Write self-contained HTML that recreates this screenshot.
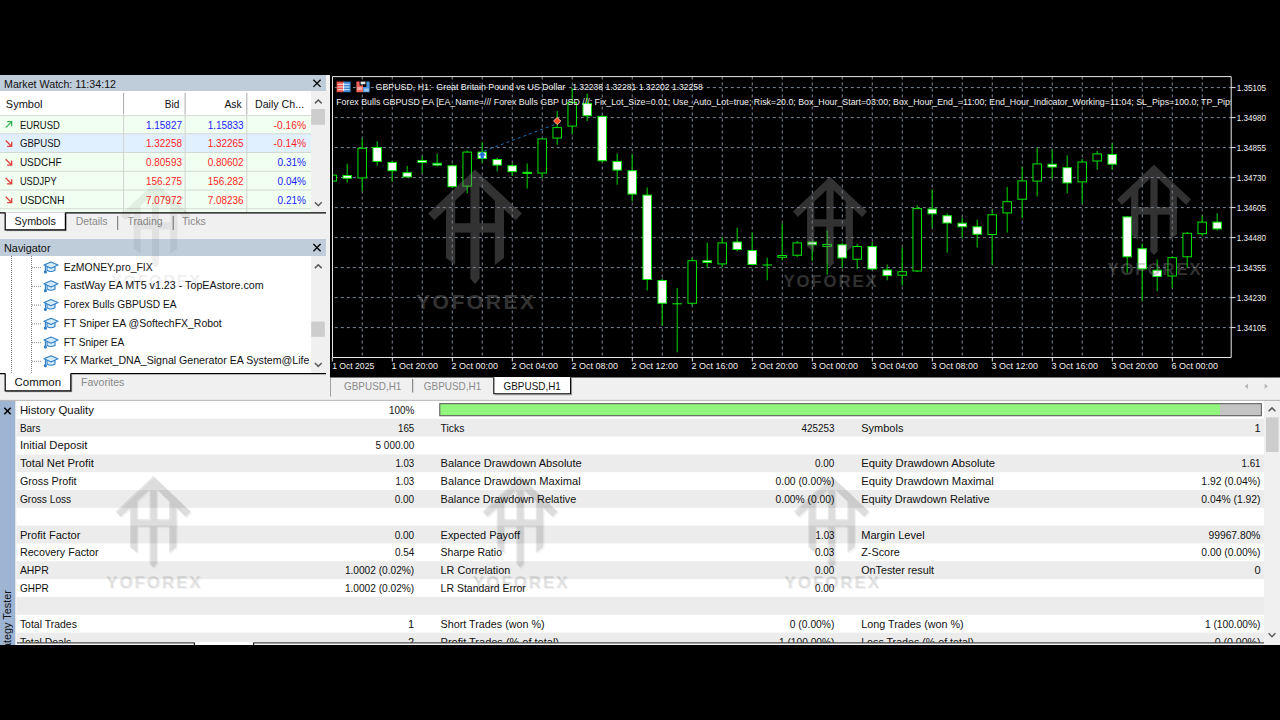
<!DOCTYPE html>
<html><head><meta charset="utf-8"><title>MetaTrader 5 - Strategy Tester</title>
<style>
html,body{margin:0;padding:0;background:#000;width:1280px;height:720px;overflow:hidden}
svg{display:block}
text{font-family:"Liberation Sans",sans-serif;white-space:pre}
.ui{font-size:11px;fill:#111}
.ch{font-size:9.3px;fill:#f4f4f4;opacity:0.995}
</style></head><body>
<svg width="1280" height="720" viewBox="0 0 1280 720">
<rect x="0.00" y="0.00" width="1280.00" height="720.00" fill="#000"/>
<rect x="0.00" y="75.00" width="1280.00" height="570.00" fill="#f0f0f0"/>
<defs>
<g id="logo">
<polygon points="0,0 46.9,44.2 40.7,50.9 0,12.6 -40.7,50.9 -46.9,44.2"/>
<polygon points="-29,28 -19.8,22 -19.8,95.7 -29,88.5"/>
<polygon points="29,28 19.8,22 19.8,95.7 29,88.5"/>
<polygon points="-4.6,6 4.6,6 4.6,109.4 0,114.6 -4.6,109.4"/>
<rect x="-29" y="53.8" width="58" height="9.4"/>
</g>
<clipPath id="chartclip"><rect x="333" y="77" width="898" height="280"/></clipPath>
<clipPath id="mwclip"><rect x="0" y="91" width="311" height="121.5"/></clipPath>
<clipPath id="navclip"><rect x="0" y="256" width="311" height="117"/></clipPath>
<clipPath id="stclip"><rect x="0" y="400" width="1280" height="243"/></clipPath>
</defs>
<rect x="0.00" y="75.00" width="326.00" height="16.00" fill="#bfcddb"/>
<text class="ui" x="4.0" y="88.0" textLength="112.0" lengthAdjust="spacingAndGlyphs">Market Watch: 11:34:12</text>
<line x1="313.40" y1="79.70" x2="320.60" y2="86.90" stroke="#000" stroke-width="1.3"/>
<line x1="313.40" y1="86.90" x2="320.60" y2="79.70" stroke="#000" stroke-width="1.3"/>
<rect x="0.00" y="91.00" width="311.00" height="121.50" fill="#fff"/>
<rect x="0.00" y="115.60" width="311.00" height="18.15" fill="#f0fff0"/>
<rect x="0.00" y="133.75" width="311.00" height="18.75" fill="#e1f0ff"/>
<rect x="0.00" y="152.50" width="311.00" height="18.75" fill="#f0fff0"/>
<rect x="0.00" y="171.25" width="311.00" height="18.75" fill="#f0fff0"/>
<rect x="0.00" y="190.00" width="311.00" height="18.75" fill="#f0fff0"/>
<rect x="0.00" y="208.75" width="311.00" height="3.75" fill="#f0fff0"/>
<line x1="0.00" y1="115.60" x2="311.00" y2="115.60" stroke="#d4d8d4" stroke-width="1"/>
<line x1="0.00" y1="133.75" x2="311.00" y2="133.75" stroke="#d4d8d4" stroke-width="1"/>
<line x1="0.00" y1="152.50" x2="311.00" y2="152.50" stroke="#d4d8d4" stroke-width="1"/>
<line x1="0.00" y1="171.25" x2="311.00" y2="171.25" stroke="#d4d8d4" stroke-width="1"/>
<line x1="0.00" y1="190.00" x2="311.00" y2="190.00" stroke="#d4d8d4" stroke-width="1"/>
<line x1="0.00" y1="208.75" x2="311.00" y2="208.75" stroke="#d4d8d4" stroke-width="1"/>
<line x1="123.60" y1="115.00" x2="123.60" y2="212.50" stroke="#d0d4d0" stroke-width="1"/>
<line x1="123.60" y1="93.00" x2="123.60" y2="114.50" stroke="#a8a8a8" stroke-width="1"/>
<line x1="185.10" y1="115.00" x2="185.10" y2="212.50" stroke="#d0d4d0" stroke-width="1"/>
<line x1="185.10" y1="93.00" x2="185.10" y2="114.50" stroke="#a8a8a8" stroke-width="1"/>
<line x1="246.80" y1="115.00" x2="246.80" y2="212.50" stroke="#d0d4d0" stroke-width="1"/>
<line x1="246.80" y1="93.00" x2="246.80" y2="114.50" stroke="#a8a8a8" stroke-width="1"/>
<text class="ui" x="5.8" y="108.3" textLength="36.7" lengthAdjust="spacingAndGlyphs">Symbol</text>
<text class="ui" x="179.3" y="108.3" text-anchor="end" textLength="14.6" lengthAdjust="spacingAndGlyphs">Bid</text>
<text class="ui" x="241.7" y="108.3" text-anchor="end" textLength="17.3" lengthAdjust="spacingAndGlyphs">Ask</text>
<text class="ui" x="255.0" y="108.3" textLength="49.1" lengthAdjust="spacingAndGlyphs">Daily Ch...</text>
<path d="M5.699999999999999,127.7 L11.5,121.9 M7.1,121.7 H11.7 V126.3" stroke="#2fb34a" stroke-width="1.2" fill="none"/>
<text class="ui" x="19.9" y="128.5" textLength="39.9" lengthAdjust="spacingAndGlyphs">EURUSD</text>
<text class="ui" x="181.9" y="128.5" text-anchor="end" textLength="35.8" lengthAdjust="spacingAndGlyphs" style="fill:#1a1aff">1.15827</text>
<text class="ui" x="243.6" y="128.5" text-anchor="end" textLength="35.9" lengthAdjust="spacingAndGlyphs" style="fill:#1a1aff">1.15833</text>
<text class="ui" x="306.0" y="128.5" text-anchor="end" textLength="32.4" lengthAdjust="spacingAndGlyphs" style="fill:#ff1e1e">-0.16%</text>
<path d="M5.699999999999999,140.45 L11.5,146.25 M7.1,146.45 H11.7 V141.85" stroke="#e0403a" stroke-width="1.3" fill="none"/>
<text class="ui" x="19.9" y="147.2" textLength="40.7" lengthAdjust="spacingAndGlyphs">GBPUSD</text>
<text class="ui" x="181.9" y="147.2" text-anchor="end" textLength="35.8" lengthAdjust="spacingAndGlyphs" style="fill:#ff1e1e">1.32258</text>
<text class="ui" x="243.6" y="147.2" text-anchor="end" textLength="35.9" lengthAdjust="spacingAndGlyphs" style="fill:#ff1e1e">1.32265</text>
<text class="ui" x="306.0" y="147.2" text-anchor="end" textLength="32.4" lengthAdjust="spacingAndGlyphs" style="fill:#ff1e1e">-0.14%</text>
<path d="M5.699999999999999,159.2 L11.5,165.0 M7.1,165.2 H11.7 V160.6" stroke="#e0403a" stroke-width="1.3" fill="none"/>
<text class="ui" x="19.9" y="166.0" textLength="41.7" lengthAdjust="spacingAndGlyphs">USDCHF</text>
<text class="ui" x="181.9" y="166.0" text-anchor="end" textLength="35.8" lengthAdjust="spacingAndGlyphs" style="fill:#ff1e1e">0.80593</text>
<text class="ui" x="243.6" y="166.0" text-anchor="end" textLength="35.9" lengthAdjust="spacingAndGlyphs" style="fill:#ff1e1e">0.80602</text>
<text class="ui" x="306.0" y="166.0" text-anchor="end" textLength="28.4" lengthAdjust="spacingAndGlyphs" style="fill:#1a1aff">0.31%</text>
<path d="M5.699999999999999,177.95 L11.5,183.75 M7.1,183.95 H11.7 V179.35" stroke="#e0403a" stroke-width="1.3" fill="none"/>
<text class="ui" x="19.9" y="184.8" textLength="36.7" lengthAdjust="spacingAndGlyphs">USDJPY</text>
<text class="ui" x="181.9" y="184.8" text-anchor="end" textLength="35.8" lengthAdjust="spacingAndGlyphs" style="fill:#ff1e1e">156.275</text>
<text class="ui" x="243.6" y="184.8" text-anchor="end" textLength="35.9" lengthAdjust="spacingAndGlyphs" style="fill:#ff1e1e">156.282</text>
<text class="ui" x="306.0" y="184.8" text-anchor="end" textLength="28.4" lengthAdjust="spacingAndGlyphs" style="fill:#1a1aff">0.04%</text>
<path d="M5.699999999999999,196.7 L11.5,202.5 M7.1,202.7 H11.7 V198.1" stroke="#e0403a" stroke-width="1.3" fill="none"/>
<text class="ui" x="19.9" y="203.5" textLength="44.6" lengthAdjust="spacingAndGlyphs">USDCNH</text>
<text class="ui" x="181.9" y="203.5" text-anchor="end" textLength="35.8" lengthAdjust="spacingAndGlyphs" style="fill:#ff1e1e">7.07972</text>
<text class="ui" x="243.6" y="203.5" text-anchor="end" textLength="35.9" lengthAdjust="spacingAndGlyphs" style="fill:#ff1e1e">7.08236</text>
<text class="ui" x="306.0" y="203.5" text-anchor="end" textLength="28.4" lengthAdjust="spacingAndGlyphs" style="fill:#1a1aff">0.21%</text>
<rect x="311.00" y="91.00" width="15.00" height="121.50" fill="#f0f0f0"/>
<path d="M314.90000000000003,103.4 L318.3,100.0 L321.7,103.4" stroke="#5a5a5a" stroke-width="1.5" fill="none"/>
<path d="M314.90000000000003,202.3 L318.3,205.7 L321.7,202.3" stroke="#5a5a5a" stroke-width="1.5" fill="none"/>
<rect x="311.20" y="109.00" width="13.80" height="15.80" fill="#cdcdcd"/>
<line x1="0.00" y1="212.80" x2="326.00" y2="212.80" stroke="#000" stroke-width="1.2"/>
<rect x="5.20" y="212.20" width="60.20" height="17.60" fill="#fff"/>
<path d="M5.2,212.8 V229.8 H65.4 V212.8" stroke="#000" stroke-width="1.2" fill="none"/>
<path d="M6.5,230.6 H66.3 V214" stroke="#000" stroke-opacity="0.38" stroke-width="1" fill="none"/>
<text class="ui" x="14.6" y="225.2" textLength="41.2" lengthAdjust="spacingAndGlyphs">Symbols</text>
<text class="ui" x="75.7" y="225.2" textLength="31.9" lengthAdjust="spacingAndGlyphs" style="fill:#8a8a8a">Details</text>
<text class="ui" x="127.5" y="225.2" textLength="35.0" lengthAdjust="spacingAndGlyphs" style="fill:#8a8a8a">Trading</text>
<text class="ui" x="181.9" y="225.2" textLength="23.9" lengthAdjust="spacingAndGlyphs" style="fill:#8a8a8a">Ticks</text>
<line x1="117.70" y1="216.00" x2="117.70" y2="230.00" stroke="#707070" stroke-width="1"/>
<line x1="173.20" y1="216.00" x2="173.20" y2="230.00" stroke="#707070" stroke-width="1"/>
<rect x="0.00" y="239.00" width="326.00" height="17.00" fill="#bfcddb"/>
<text class="ui" x="4.0" y="252.1" textLength="46.5" lengthAdjust="spacingAndGlyphs">Navigator</text>
<line x1="313.40" y1="244.00" x2="320.60" y2="251.20" stroke="#000" stroke-width="1.3"/>
<line x1="313.40" y1="251.20" x2="320.60" y2="244.00" stroke="#000" stroke-width="1.3"/>
<rect x="0.00" y="256.00" width="311.00" height="117.30" fill="#fff"/>
<rect x="311.00" y="256.00" width="15.00" height="117.30" fill="#f0f0f0"/>
<path d="M314.90000000000003,268.09999999999997 L318.3,264.7 L321.7,268.09999999999997" stroke="#5a5a5a" stroke-width="1.5" fill="none"/>
<path d="M314.90000000000003,363.0 L318.3,366.4 L321.7,363.0" stroke="#5a5a5a" stroke-width="1.5" fill="none"/>
<rect x="311.20" y="321.60" width="13.60" height="15.20" fill="#cdcdcd"/>
<g clip-path="url(#navclip)">
<line x1="11.50" y1="256.00" x2="11.50" y2="373.00" stroke="#808080" stroke-width="1" stroke-dasharray="1 1"/>
<line x1="31.50" y1="256.00" x2="31.50" y2="373.00" stroke="#808080" stroke-width="1" stroke-dasharray="1 1"/>
<line x1="32.00" y1="267.60" x2="41.50" y2="267.60" stroke="#909090" stroke-width="1" stroke-dasharray="1 1"/>
<g transform="translate(51,267.6)" stroke="#2e7fc4" stroke-width="1.1" fill="#d6ebfa" stroke-linejoin="round"><path d="M-4,-1 V2.6 Q0,5.2 4,2.6 V-1"/><path d="M-7,-2.6 L0,-5.6 L7,-2.6 L0,0.6 Z"/><path d="M-5.6,-2.2 V3.6" fill="none"/><circle cx="-5.6" cy="4.3" r="1" fill="#2e7fc4"/></g>
<text class="ui" x="63.7" y="270.6" textLength="89.0" lengthAdjust="spacingAndGlyphs">EzMONEY.pro_FIX</text>
<line x1="32.00" y1="286.35" x2="41.50" y2="286.35" stroke="#909090" stroke-width="1" stroke-dasharray="1 1"/>
<g transform="translate(51,286.35)" stroke="#2e7fc4" stroke-width="1.1" fill="#d6ebfa" stroke-linejoin="round"><path d="M-4,-1 V2.6 Q0,5.2 4,2.6 V-1"/><path d="M-7,-2.6 L0,-5.6 L7,-2.6 L0,0.6 Z"/><path d="M-5.6,-2.2 V3.6" fill="none"/><circle cx="-5.6" cy="4.3" r="1" fill="#2e7fc4"/></g>
<text class="ui" x="63.7" y="289.4" textLength="200.0" lengthAdjust="spacingAndGlyphs">FastWay EA MT5 v1.23 - TopEAstore.com</text>
<line x1="32.00" y1="305.10" x2="41.50" y2="305.10" stroke="#909090" stroke-width="1" stroke-dasharray="1 1"/>
<g transform="translate(51,305.1)" stroke="#2e7fc4" stroke-width="1.1" fill="#d6ebfa" stroke-linejoin="round"><path d="M-4,-1 V2.6 Q0,5.2 4,2.6 V-1"/><path d="M-7,-2.6 L0,-5.6 L7,-2.6 L0,0.6 Z"/><path d="M-5.6,-2.2 V3.6" fill="none"/><circle cx="-5.6" cy="4.3" r="1" fill="#2e7fc4"/></g>
<text class="ui" x="63.7" y="308.1" textLength="112.9" lengthAdjust="spacingAndGlyphs">Forex Bulls GBPUSD EA</text>
<line x1="32.00" y1="323.85" x2="41.50" y2="323.85" stroke="#909090" stroke-width="1" stroke-dasharray="1 1"/>
<g transform="translate(51,323.85)" stroke="#2e7fc4" stroke-width="1.1" fill="#d6ebfa" stroke-linejoin="round"><path d="M-4,-1 V2.6 Q0,5.2 4,2.6 V-1"/><path d="M-7,-2.6 L0,-5.6 L7,-2.6 L0,0.6 Z"/><path d="M-5.6,-2.2 V3.6" fill="none"/><circle cx="-5.6" cy="4.3" r="1" fill="#2e7fc4"/></g>
<text class="ui" x="63.7" y="326.9" textLength="158.1" lengthAdjust="spacingAndGlyphs">FT Sniper EA @SoftechFX_Robot</text>
<line x1="32.00" y1="342.60" x2="41.50" y2="342.60" stroke="#909090" stroke-width="1" stroke-dasharray="1 1"/>
<g transform="translate(51,342.6)" stroke="#2e7fc4" stroke-width="1.1" fill="#d6ebfa" stroke-linejoin="round"><path d="M-4,-1 V2.6 Q0,5.2 4,2.6 V-1"/><path d="M-7,-2.6 L0,-5.6 L7,-2.6 L0,0.6 Z"/><path d="M-5.6,-2.2 V3.6" fill="none"/><circle cx="-5.6" cy="4.3" r="1" fill="#2e7fc4"/></g>
<text class="ui" x="63.7" y="345.6" textLength="60.6" lengthAdjust="spacingAndGlyphs">FT Sniper EA</text>
<line x1="32.00" y1="361.35" x2="41.50" y2="361.35" stroke="#909090" stroke-width="1" stroke-dasharray="1 1"/>
<g transform="translate(51,361.35)" stroke="#2e7fc4" stroke-width="1.1" fill="#d6ebfa" stroke-linejoin="round"><path d="M-4,-1 V2.6 Q0,5.2 4,2.6 V-1"/><path d="M-7,-2.6 L0,-5.6 L7,-2.6 L0,0.6 Z"/><path d="M-5.6,-2.2 V3.6" fill="none"/><circle cx="-5.6" cy="4.3" r="1" fill="#2e7fc4"/></g>
<text class="ui" x="63.7" y="364.4" textLength="245.7" lengthAdjust="spacingAndGlyphs">FX Market_DNA_Signal Generator EA System@Life</text>
</g>
<line x1="0.00" y1="373.60" x2="326.00" y2="373.60" stroke="#000" stroke-width="1.2"/>
<rect x="5.20" y="373.00" width="65.60" height="17.80" fill="#fff"/>
<path d="M5.2,373.6 V390.8 H70.8 V373.6" stroke="#000" stroke-width="1.2" fill="none"/>
<path d="M6.5,391.7 H71.7 V375" stroke="#000" stroke-opacity="0.38" stroke-width="1" fill="none"/>
<text class="ui" x="14.6" y="386.3" textLength="46.5" lengthAdjust="spacingAndGlyphs">Common</text>
<text class="ui" x="81.0" y="386.3" textLength="43.3" lengthAdjust="spacingAndGlyphs" style="fill:#8a8a8a">Favorites</text>
<rect x="330.00" y="75.00" width="950.00" height="302.50" fill="#000"/>
<g stroke="#7e8c9c" stroke-width="1" stroke-dasharray="3 3" fill="none">
<line x1="362.25" y1="76.5" x2="362.25" y2="357"/>
<line x1="392.25" y1="76.5" x2="392.25" y2="357"/>
<line x1="422.25" y1="76.5" x2="422.25" y2="357"/>
<line x1="452.25" y1="76.5" x2="452.25" y2="357"/>
<line x1="482.25" y1="76.5" x2="482.25" y2="357"/>
<line x1="512.25" y1="76.5" x2="512.25" y2="357"/>
<line x1="542.25" y1="76.5" x2="542.25" y2="357"/>
<line x1="572.25" y1="76.5" x2="572.25" y2="357"/>
<line x1="602.25" y1="76.5" x2="602.25" y2="357"/>
<line x1="632.25" y1="76.5" x2="632.25" y2="357"/>
<line x1="662.25" y1="76.5" x2="662.25" y2="357"/>
<line x1="692.25" y1="76.5" x2="692.25" y2="357"/>
<line x1="722.25" y1="76.5" x2="722.25" y2="357"/>
<line x1="752.25" y1="76.5" x2="752.25" y2="357"/>
<line x1="782.25" y1="76.5" x2="782.25" y2="357"/>
<line x1="812.25" y1="76.5" x2="812.25" y2="357"/>
<line x1="842.25" y1="76.5" x2="842.25" y2="357"/>
<line x1="872.25" y1="76.5" x2="872.25" y2="357"/>
<line x1="902.25" y1="76.5" x2="902.25" y2="357"/>
<line x1="932.25" y1="76.5" x2="932.25" y2="357"/>
<line x1="962.25" y1="76.5" x2="962.25" y2="357"/>
<line x1="992.25" y1="76.5" x2="992.25" y2="357"/>
<line x1="1022.25" y1="76.5" x2="1022.25" y2="357"/>
<line x1="1052.25" y1="76.5" x2="1052.25" y2="357"/>
<line x1="1082.25" y1="76.5" x2="1082.25" y2="357"/>
<line x1="1112.25" y1="76.5" x2="1112.25" y2="357"/>
<line x1="1142.25" y1="76.5" x2="1142.25" y2="357"/>
<line x1="1172.25" y1="76.5" x2="1172.25" y2="357"/>
<line x1="1202.25" y1="76.5" x2="1202.25" y2="357"/>
<line x1="334.8" y1="87.60" x2="1231" y2="87.60"/>
<line x1="334.8" y1="117.60" x2="1231" y2="117.60"/>
<line x1="334.8" y1="147.60" x2="1231" y2="147.60"/>
<line x1="334.8" y1="177.60" x2="1231" y2="177.60"/>
<line x1="334.8" y1="207.60" x2="1231" y2="207.60"/>
<line x1="334.8" y1="237.60" x2="1231" y2="237.60"/>
<line x1="334.8" y1="267.60" x2="1231" y2="267.60"/>
<line x1="334.8" y1="297.60" x2="1231" y2="297.60"/>
<line x1="334.8" y1="327.60" x2="1231" y2="327.60"/>
</g>
<g clip-path="url(#chartclip)">
<line x1="332.20" y1="174.60" x2="332.20" y2="181.60" stroke="#00c000" stroke-width="1.15"/>
<rect x="327.95" y="175.10" width="8.50" height="6.00" fill="#000" stroke="#00e600" stroke-width="1"/>
<line x1="347.20" y1="163.75" x2="347.20" y2="182.50" stroke="#00c000" stroke-width="1.15"/>
<rect x="342.95" y="175.50" width="8.50" height="2.75" fill="#fff" stroke="#00e600" stroke-width="1"/>
<line x1="362.20" y1="138.40" x2="362.20" y2="190.90" stroke="#00c000" stroke-width="1.15"/>
<rect x="357.95" y="148.30" width="8.50" height="29.60" fill="#000" stroke="#00e600" stroke-width="1"/>
<line x1="377.20" y1="141.25" x2="377.20" y2="165.60" stroke="#00c000" stroke-width="1.15"/>
<rect x="372.95" y="147.40" width="8.50" height="14.00" fill="#fff" stroke="#00e600" stroke-width="1"/>
<line x1="392.20" y1="160.90" x2="392.20" y2="181.60" stroke="#00c000" stroke-width="1.15"/>
<rect x="387.95" y="162.40" width="8.50" height="8.35" fill="#fff" stroke="#00e600" stroke-width="1"/>
<line x1="407.20" y1="166.00" x2="407.20" y2="177.80" stroke="#00c000" stroke-width="1.15"/>
<rect x="402.95" y="172.70" width="8.50" height="4.20" fill="#fff" stroke="#00e600" stroke-width="1"/>
<line x1="422.20" y1="156.25" x2="422.20" y2="173.10" stroke="#00c000" stroke-width="1.15"/>
<rect x="417.95" y="160.50" width="8.50" height="2.00" fill="#fff" stroke="#00e600" stroke-width="1"/>
<line x1="437.20" y1="153.40" x2="437.20" y2="166.60" stroke="#00c000" stroke-width="1.15"/>
<rect x="432.95" y="163.30" width="8.50" height="1.80" fill="#fff" stroke="#00e600" stroke-width="1"/>
<line x1="452.20" y1="164.70" x2="452.20" y2="188.10" stroke="#00c000" stroke-width="1.15"/>
<rect x="447.95" y="165.75" width="8.50" height="20.95" fill="#fff" stroke="#00e600" stroke-width="1"/>
<line x1="467.20" y1="150.60" x2="467.20" y2="193.20" stroke="#00c000" stroke-width="1.15"/>
<rect x="462.95" y="152.10" width="8.50" height="34.00" fill="#000" stroke="#00e600" stroke-width="1"/>
<line x1="482.20" y1="142.20" x2="482.20" y2="162.80" stroke="#00c000" stroke-width="1.15"/>
<rect x="477.95" y="152.10" width="8.50" height="6.40" fill="#fff" stroke="#00e600" stroke-width="1"/>
<line x1="497.20" y1="158.10" x2="497.20" y2="171.25" stroke="#00c000" stroke-width="1.15"/>
<rect x="492.95" y="159.50" width="8.50" height="5.60" fill="#fff" stroke="#00e600" stroke-width="1"/>
<line x1="512.20" y1="163.75" x2="512.20" y2="176.00" stroke="#00c000" stroke-width="1.15"/>
<rect x="507.95" y="165.75" width="8.50" height="5.95" fill="#fff" stroke="#00e600" stroke-width="1"/>
<line x1="527.20" y1="163.40" x2="527.20" y2="188.50" stroke="#00c000" stroke-width="1.15"/>
<rect x="522.95" y="172.30" width="8.50" height="1.20" fill="#fff" stroke="#00e600" stroke-width="1"/>
<line x1="542.20" y1="138.40" x2="542.20" y2="177.80" stroke="#00c000" stroke-width="1.15"/>
<rect x="537.95" y="138.90" width="8.50" height="34.10" fill="#000" stroke="#00e600" stroke-width="1"/>
<line x1="557.20" y1="111.10" x2="557.20" y2="144.70" stroke="#00c000" stroke-width="1.15"/>
<rect x="552.95" y="127.60" width="8.50" height="10.50" fill="#000" stroke="#00e600" stroke-width="1"/>
<line x1="572.20" y1="88.10" x2="572.20" y2="134.50" stroke="#00c000" stroke-width="1.15"/>
<rect x="567.95" y="102.50" width="8.50" height="23.60" fill="#000" stroke="#00e600" stroke-width="1"/>
<line x1="587.20" y1="93.75" x2="587.20" y2="121.00" stroke="#00c000" stroke-width="1.15"/>
<rect x="582.95" y="103.50" width="8.50" height="12.25" fill="#fff" stroke="#00e600" stroke-width="1"/>
<line x1="602.20" y1="115.30" x2="602.20" y2="162.20" stroke="#00c000" stroke-width="1.15"/>
<rect x="597.95" y="116.40" width="8.50" height="44.35" fill="#fff" stroke="#00e600" stroke-width="1"/>
<line x1="617.20" y1="153.40" x2="617.20" y2="184.70" stroke="#00c000" stroke-width="1.15"/>
<rect x="612.95" y="161.40" width="8.50" height="8.70" fill="#fff" stroke="#00e600" stroke-width="1"/>
<line x1="632.20" y1="154.10" x2="632.20" y2="201.60" stroke="#00c000" stroke-width="1.15"/>
<rect x="627.95" y="170.75" width="8.50" height="23.35" fill="#fff" stroke="#00e600" stroke-width="1"/>
<line x1="647.20" y1="187.50" x2="647.20" y2="290.50" stroke="#00c000" stroke-width="1.15"/>
<rect x="642.95" y="195.10" width="8.50" height="84.40" fill="#fff" stroke="#00e600" stroke-width="1"/>
<line x1="662.20" y1="278.40" x2="662.20" y2="326.00" stroke="#00c000" stroke-width="1.15"/>
<rect x="657.95" y="280.50" width="8.50" height="22.75" fill="#fff" stroke="#00e600" stroke-width="1"/>
<line x1="677.20" y1="288.00" x2="677.20" y2="352.25" stroke="#00c000" stroke-width="1.15"/>
<line x1="672.45" y1="303.80" x2="681.95" y2="303.80" stroke="#00e600" stroke-width="1.1"/>
<line x1="692.20" y1="257.80" x2="692.20" y2="305.60" stroke="#00c000" stroke-width="1.15"/>
<rect x="687.95" y="260.75" width="8.50" height="42.50" fill="#000" stroke="#00e600" stroke-width="1"/>
<line x1="707.20" y1="242.80" x2="707.20" y2="267.75" stroke="#00c000" stroke-width="1.15"/>
<rect x="702.95" y="260.75" width="8.50" height="1.75" fill="#fff" stroke="#00e600" stroke-width="1"/>
<line x1="722.20" y1="237.20" x2="722.20" y2="267.20" stroke="#00c000" stroke-width="1.15"/>
<rect x="717.95" y="242.90" width="8.50" height="21.00" fill="#000" stroke="#00e600" stroke-width="1"/>
<line x1="737.20" y1="227.80" x2="737.20" y2="251.25" stroke="#00c000" stroke-width="1.15"/>
<rect x="732.95" y="242.00" width="8.50" height="7.50" fill="#fff" stroke="#00e600" stroke-width="1"/>
<line x1="752.20" y1="232.50" x2="752.20" y2="265.30" stroke="#00c000" stroke-width="1.15"/>
<rect x="747.95" y="250.50" width="8.50" height="14.00" fill="#fff" stroke="#00e600" stroke-width="1"/>
<line x1="767.20" y1="257.80" x2="767.20" y2="280.30" stroke="#00c000" stroke-width="1.15"/>
<line x1="762.45" y1="265.00" x2="771.95" y2="265.00" stroke="#00e600" stroke-width="1.1"/>
<line x1="782.20" y1="223.50" x2="782.20" y2="260.60" stroke="#00c000" stroke-width="1.15"/>
<rect x="777.95" y="255.50" width="8.50" height="1.80" fill="#000" stroke="#00e600" stroke-width="1"/>
<line x1="797.20" y1="241.00" x2="797.20" y2="256.90" stroke="#00c000" stroke-width="1.15"/>
<rect x="792.95" y="242.90" width="8.50" height="12.35" fill="#000" stroke="#00e600" stroke-width="1"/>
<line x1="812.20" y1="241.00" x2="812.20" y2="261.00" stroke="#00c000" stroke-width="1.15"/>
<rect x="807.95" y="242.00" width="8.50" height="2.75" fill="#fff" stroke="#00e600" stroke-width="1"/>
<line x1="827.20" y1="230.60" x2="827.20" y2="274.70" stroke="#00c000" stroke-width="1.15"/>
<rect x="822.95" y="244.40" width="8.50" height="2.00" fill="#000" stroke="#00e600" stroke-width="1"/>
<line x1="842.20" y1="242.80" x2="842.20" y2="268.10" stroke="#00c000" stroke-width="1.15"/>
<rect x="837.95" y="244.80" width="8.50" height="13.10" fill="#fff" stroke="#00e600" stroke-width="1"/>
<line x1="857.20" y1="243.75" x2="857.20" y2="269.00" stroke="#00c000" stroke-width="1.15"/>
<rect x="852.95" y="246.50" width="8.50" height="12.70" fill="#000" stroke="#00e600" stroke-width="1"/>
<line x1="872.20" y1="241.90" x2="872.20" y2="270.00" stroke="#00c000" stroke-width="1.15"/>
<rect x="867.95" y="246.60" width="8.50" height="22.40" fill="#fff" stroke="#00e600" stroke-width="1"/>
<line x1="887.20" y1="264.40" x2="887.20" y2="280.20" stroke="#00c000" stroke-width="1.15"/>
<rect x="882.95" y="270.00" width="8.50" height="5.60" fill="#fff" stroke="#00e600" stroke-width="1"/>
<line x1="902.20" y1="247.50" x2="902.20" y2="285.60" stroke="#00c000" stroke-width="1.15"/>
<rect x="897.95" y="271.70" width="8.50" height="3.50" fill="#000" stroke="#00e600" stroke-width="1"/>
<line x1="917.20" y1="205.30" x2="917.20" y2="271.90" stroke="#00c000" stroke-width="1.15"/>
<rect x="912.95" y="208.60" width="8.50" height="62.40" fill="#000" stroke="#00e600" stroke-width="1"/>
<line x1="932.20" y1="189.40" x2="932.20" y2="227.80" stroke="#00c000" stroke-width="1.15"/>
<rect x="927.95" y="209.00" width="8.50" height="4.80" fill="#fff" stroke="#00e600" stroke-width="1"/>
<line x1="947.20" y1="213.40" x2="947.20" y2="252.75" stroke="#00c000" stroke-width="1.15"/>
<rect x="942.95" y="215.75" width="8.50" height="7.25" fill="#fff" stroke="#00e600" stroke-width="1"/>
<line x1="962.20" y1="217.50" x2="962.20" y2="237.75" stroke="#00c000" stroke-width="1.15"/>
<rect x="957.95" y="223.25" width="8.50" height="3.50" fill="#fff" stroke="#00e600" stroke-width="1"/>
<line x1="977.20" y1="219.75" x2="977.20" y2="247.50" stroke="#00c000" stroke-width="1.15"/>
<rect x="972.95" y="226.80" width="8.50" height="7.45" fill="#fff" stroke="#00e600" stroke-width="1"/>
<line x1="992.20" y1="209.60" x2="992.20" y2="264.75" stroke="#00c000" stroke-width="1.15"/>
<rect x="987.95" y="214.80" width="8.50" height="19.70" fill="#000" stroke="#00e600" stroke-width="1"/>
<line x1="1007.20" y1="187.10" x2="1007.20" y2="232.50" stroke="#00c000" stroke-width="1.15"/>
<rect x="1002.95" y="201.70" width="8.50" height="11.20" fill="#000" stroke="#00e600" stroke-width="1"/>
<line x1="1022.20" y1="166.50" x2="1022.20" y2="217.90" stroke="#00c000" stroke-width="1.15"/>
<rect x="1017.95" y="180.90" width="8.50" height="18.30" fill="#000" stroke="#00e600" stroke-width="1"/>
<line x1="1037.20" y1="147.80" x2="1037.20" y2="196.60" stroke="#00c000" stroke-width="1.15"/>
<rect x="1032.95" y="163.90" width="8.50" height="17.20" fill="#000" stroke="#00e600" stroke-width="1"/>
<line x1="1052.20" y1="149.70" x2="1052.20" y2="179.10" stroke="#00c000" stroke-width="1.15"/>
<rect x="1047.95" y="164.25" width="8.50" height="2.75" fill="#fff" stroke="#00e600" stroke-width="1"/>
<line x1="1067.20" y1="155.30" x2="1067.20" y2="193.30" stroke="#00c000" stroke-width="1.15"/>
<rect x="1062.95" y="167.70" width="8.50" height="15.20" fill="#fff" stroke="#00e600" stroke-width="1"/>
<line x1="1082.20" y1="159.00" x2="1082.20" y2="203.50" stroke="#00c000" stroke-width="1.15"/>
<rect x="1077.95" y="162.00" width="8.50" height="19.90" fill="#000" stroke="#00e600" stroke-width="1"/>
<line x1="1097.20" y1="151.00" x2="1097.20" y2="169.75" stroke="#00c000" stroke-width="1.15"/>
<rect x="1092.95" y="153.90" width="8.50" height="7.10" fill="#000" stroke="#00e600" stroke-width="1"/>
<line x1="1112.20" y1="143.50" x2="1112.20" y2="169.75" stroke="#00c000" stroke-width="1.15"/>
<rect x="1107.95" y="154.50" width="8.50" height="9.70" fill="#fff" stroke="#00e600" stroke-width="1"/>
<line x1="1127.20" y1="216.00" x2="1127.20" y2="272.75" stroke="#00c000" stroke-width="1.15"/>
<rect x="1122.95" y="216.90" width="8.50" height="39.90" fill="#fff" stroke="#00e600" stroke-width="1"/>
<line x1="1142.20" y1="243.50" x2="1142.20" y2="300.90" stroke="#00c000" stroke-width="1.15"/>
<rect x="1137.95" y="248.70" width="8.50" height="20.20" fill="#fff" stroke="#00e600" stroke-width="1"/>
<line x1="1157.20" y1="259.60" x2="1157.20" y2="291.00" stroke="#00c000" stroke-width="1.15"/>
<rect x="1152.95" y="270.25" width="8.50" height="6.15" fill="#fff" stroke="#00e600" stroke-width="1"/>
<line x1="1172.20" y1="256.25" x2="1172.20" y2="287.75" stroke="#00c000" stroke-width="1.15"/>
<rect x="1167.95" y="257.70" width="8.50" height="18.30" fill="#000" stroke="#00e600" stroke-width="1"/>
<line x1="1187.20" y1="231.90" x2="1187.20" y2="267.50" stroke="#00c000" stroke-width="1.15"/>
<rect x="1182.95" y="233.30" width="8.50" height="23.50" fill="#000" stroke="#00e600" stroke-width="1"/>
<line x1="1202.20" y1="215.40" x2="1202.20" y2="235.80" stroke="#00c000" stroke-width="1.15"/>
<rect x="1197.95" y="222.10" width="8.50" height="11.60" fill="#000" stroke="#00e600" stroke-width="1"/>
<line x1="1217.20" y1="213.20" x2="1217.20" y2="230.60" stroke="#00c000" stroke-width="1.15"/>
<rect x="1212.95" y="222.10" width="8.50" height="6.80" fill="#fff" stroke="#00e600" stroke-width="1"/>
<line x1="484.00" y1="151.00" x2="555.00" y2="124.50" stroke="#1a6fb4" stroke-width="1" stroke-dasharray="3 3"/>
<path d="M482.2,151.6 L486,155.6 H483.8 V158.4 H480.6 V155.6 H478.4 Z" fill="#1e6fd6"/>
<path d="M557.2,117.4 L560.8,121 L557.2,124.6 L553.6,121 Z" fill="#ff4a1c" stroke="#ffd0c0" stroke-width="0.8"/>
</g>
<g fill="#808080" opacity="0.39"><use href="#logo" transform="translate(475,169.4) scale(1.0)"/>
<text x="416.0" y="308.8" font-family="Liberation Sans, sans-serif" font-weight="bold" font-size="21.1" textLength="118.0" lengthAdjust="spacing">YOFOREX</text></g>
<g fill="#808080" opacity="0.39"><use href="#logo" transform="translate(830,176.7) scale(0.79)"/>
<text x="783.4" y="286.8" font-family="Liberation Sans, sans-serif" font-weight="bold" font-size="16.7" textLength="93.2" lengthAdjust="spacing">YOFOREX</text></g>
<g fill="#808080" opacity="0.39"><use href="#logo" transform="translate(1154,164.7) scale(0.79)"/>
<text x="1107.4" y="274.8" font-family="Liberation Sans, sans-serif" font-weight="bold" font-size="16.7" textLength="93.2" lengthAdjust="spacing">YOFOREX</text></g>
<path d="M332.5,357.5 V76.6 H1231.2 V357.5 Z" stroke="#e8e8e8" stroke-width="1" fill="none"/>
<line x1="1231.00" y1="87.60" x2="1235.50" y2="87.60" stroke="#e8e8e8" stroke-width="1"/>
<text class="ch" x="1236.8" y="91.0" textLength="29.3" lengthAdjust="spacingAndGlyphs">1.35105</text>
<line x1="1231.00" y1="117.60" x2="1235.50" y2="117.60" stroke="#e8e8e8" stroke-width="1"/>
<text class="ch" x="1236.8" y="121.0" textLength="29.3" lengthAdjust="spacingAndGlyphs">1.34980</text>
<line x1="1231.00" y1="147.60" x2="1235.50" y2="147.60" stroke="#e8e8e8" stroke-width="1"/>
<text class="ch" x="1236.8" y="151.0" textLength="29.3" lengthAdjust="spacingAndGlyphs">1.34855</text>
<line x1="1231.00" y1="177.60" x2="1235.50" y2="177.60" stroke="#e8e8e8" stroke-width="1"/>
<text class="ch" x="1236.8" y="181.0" textLength="29.3" lengthAdjust="spacingAndGlyphs">1.34730</text>
<line x1="1231.00" y1="207.60" x2="1235.50" y2="207.60" stroke="#e8e8e8" stroke-width="1"/>
<text class="ch" x="1236.8" y="211.0" textLength="29.3" lengthAdjust="spacingAndGlyphs">1.34605</text>
<line x1="1231.00" y1="237.60" x2="1235.50" y2="237.60" stroke="#e8e8e8" stroke-width="1"/>
<text class="ch" x="1236.8" y="241.0" textLength="29.3" lengthAdjust="spacingAndGlyphs">1.34480</text>
<line x1="1231.00" y1="267.60" x2="1235.50" y2="267.60" stroke="#e8e8e8" stroke-width="1"/>
<text class="ch" x="1236.8" y="271.0" textLength="29.3" lengthAdjust="spacingAndGlyphs">1.34355</text>
<line x1="1231.00" y1="297.60" x2="1235.50" y2="297.60" stroke="#e8e8e8" stroke-width="1"/>
<text class="ch" x="1236.8" y="301.0" textLength="29.3" lengthAdjust="spacingAndGlyphs">1.34230</text>
<line x1="1231.00" y1="327.60" x2="1235.50" y2="327.60" stroke="#e8e8e8" stroke-width="1"/>
<text class="ch" x="1236.8" y="331.0" textLength="29.3" lengthAdjust="spacingAndGlyphs">1.34105</text>
<line x1="332.30" y1="357.50" x2="332.30" y2="361.50" stroke="#e8e8e8" stroke-width="1"/>
<text class="ch" x="332.2" y="369.3" textLength="42.0" lengthAdjust="spacingAndGlyphs">1 Oct 2025</text>
<line x1="392.30" y1="357.50" x2="392.30" y2="361.50" stroke="#e8e8e8" stroke-width="1"/>
<text class="ch" x="391.6" y="369.3" textLength="46.3" lengthAdjust="spacingAndGlyphs">1 Oct 20:00</text>
<line x1="452.30" y1="357.50" x2="452.30" y2="361.50" stroke="#e8e8e8" stroke-width="1"/>
<text class="ch" x="451.6" y="369.3" textLength="46.3" lengthAdjust="spacingAndGlyphs">2 Oct 00:00</text>
<line x1="512.30" y1="357.50" x2="512.30" y2="361.50" stroke="#e8e8e8" stroke-width="1"/>
<text class="ch" x="511.6" y="369.3" textLength="46.3" lengthAdjust="spacingAndGlyphs">2 Oct 04:00</text>
<line x1="572.30" y1="357.50" x2="572.30" y2="361.50" stroke="#e8e8e8" stroke-width="1"/>
<text class="ch" x="571.6" y="369.3" textLength="46.3" lengthAdjust="spacingAndGlyphs">2 Oct 08:00</text>
<line x1="632.30" y1="357.50" x2="632.30" y2="361.50" stroke="#e8e8e8" stroke-width="1"/>
<text class="ch" x="631.6" y="369.3" textLength="46.3" lengthAdjust="spacingAndGlyphs">2 Oct 12:00</text>
<line x1="692.30" y1="357.50" x2="692.30" y2="361.50" stroke="#e8e8e8" stroke-width="1"/>
<text class="ch" x="691.6" y="369.3" textLength="46.3" lengthAdjust="spacingAndGlyphs">2 Oct 16:00</text>
<line x1="752.30" y1="357.50" x2="752.30" y2="361.50" stroke="#e8e8e8" stroke-width="1"/>
<text class="ch" x="751.6" y="369.3" textLength="46.3" lengthAdjust="spacingAndGlyphs">2 Oct 20:00</text>
<line x1="812.30" y1="357.50" x2="812.30" y2="361.50" stroke="#e8e8e8" stroke-width="1"/>
<text class="ch" x="811.6" y="369.3" textLength="46.3" lengthAdjust="spacingAndGlyphs">3 Oct 00:00</text>
<line x1="872.30" y1="357.50" x2="872.30" y2="361.50" stroke="#e8e8e8" stroke-width="1"/>
<text class="ch" x="871.6" y="369.3" textLength="46.3" lengthAdjust="spacingAndGlyphs">3 Oct 04:00</text>
<line x1="932.30" y1="357.50" x2="932.30" y2="361.50" stroke="#e8e8e8" stroke-width="1"/>
<text class="ch" x="931.6" y="369.3" textLength="46.3" lengthAdjust="spacingAndGlyphs">3 Oct 08:00</text>
<line x1="992.30" y1="357.50" x2="992.30" y2="361.50" stroke="#e8e8e8" stroke-width="1"/>
<text class="ch" x="991.6" y="369.3" textLength="46.3" lengthAdjust="spacingAndGlyphs">3 Oct 12:00</text>
<line x1="1052.30" y1="357.50" x2="1052.30" y2="361.50" stroke="#e8e8e8" stroke-width="1"/>
<text class="ch" x="1051.6" y="369.3" textLength="46.3" lengthAdjust="spacingAndGlyphs">3 Oct 16:00</text>
<line x1="1112.30" y1="357.50" x2="1112.30" y2="361.50" stroke="#e8e8e8" stroke-width="1"/>
<text class="ch" x="1111.6" y="369.3" textLength="46.3" lengthAdjust="spacingAndGlyphs">3 Oct 20:00</text>
<line x1="1172.30" y1="357.50" x2="1172.30" y2="361.50" stroke="#e8e8e8" stroke-width="1"/>
<text class="ch" x="1171.6" y="369.3" textLength="46.3" lengthAdjust="spacingAndGlyphs">6 Oct 00:00</text>
<text class="ch" x="375.6" y="90.3" textLength="189.7" lengthAdjust="spacingAndGlyphs">GBPUSD, H1:  Great Britain Pound vs US Dollar</text>
<text class="ch" x="572.2" y="90.3" textLength="130.7" lengthAdjust="spacingAndGlyphs">1.32238 1.32281 1.32202 1.32258</text>
<g clip-path="url(#chartclip)">
<text class="ch" x="336.2" y="104.5" textLength="925.4" lengthAdjust="spacingAndGlyphs">Forex Bulls GBPUSD EA [EA_Name=/// Forex Bulls GBP USD ///; Fix_Lot_Size=0.01; Use_Auto_Lot=true; Risk=20.0; Box_Hour_Start=03:00; Box_Hour_End_=11:00; End_Hour_Indicator_Working=11:04; SL_Pips=100.0; TP_Pips=200.0</text>
</g>
<g transform="translate(-1,0)"><rect x="337.6" y="81.6" width="7" height="10.6" fill="#e8524a"/><rect x="344.6" y="81.6" width="7" height="10.6" fill="#3b86d8"/><path d="M338.6,84.3 H350.6 M338.6,87 H350.6 M338.6,89.7 H350.6" stroke="#fff" stroke-width="1" opacity="0.85"/><rect x="344.1" y="82.6" width="1" height="8.6" fill="#fff" opacity="0.85"/></g>
<g><path d="M356.4,81.6 H359.6 V85.6 H363 V92.2 H356.4 Z" fill="#f0645a"/><path d="M363,92.2 V87 H366.4 V81.6 H369.6 V92.2 Z" fill="#4a96e0"/><rect x="360.6" y="81.6" width="4.8" height="2.6" fill="#e8e8e8"/><path d="M357.2,88.6 H362.2" stroke="#ffd0c8" stroke-width="3" opacity="0.6"/><path d="M364.2,90 H368.8" stroke="#cfe6ff" stroke-width="3" opacity="0.6"/></g>
<line x1="330.50" y1="378.00" x2="330.50" y2="396.50" stroke="#a0a0a0" stroke-width="1"/>
<text class="ui" x="344.0" y="390.3" textLength="57.4" lengthAdjust="spacingAndGlyphs" style="fill:#8a8a8a">GBPUSD,H1</text>
<line x1="412.70" y1="379.00" x2="412.70" y2="392.50" stroke="#707070" stroke-width="1"/>
<text class="ui" x="423.8" y="390.3" textLength="57.4" lengthAdjust="spacingAndGlyphs" style="fill:#8a8a8a">GBPUSD,H1</text>
<rect x="493.30" y="377.00" width="77.80" height="17.20" fill="#fff"/>
<path d="M493.8,377.3 V393.8 H570.6 V377.3" stroke="#000" stroke-width="1.1" fill="none"/>
<path d="M495,394.8 H571.6 V378.5" stroke="#000" stroke-opacity="0.3" stroke-width="1" fill="none"/>
<text class="ui" x="503.5" y="390.3" textLength="57.4" lengthAdjust="spacingAndGlyphs">GBPUSD,H1</text>
<path d="M1248,383.4 L1244.6,386.2 L1248,389 Z" fill="#b8b8b8"/><path d="M1264.6,383.4 L1268,386.2 L1264.6,389 Z" fill="#b8b8b8"/>
<line x1="0.00" y1="400.40" x2="1280.00" y2="400.40" stroke="#b2b2b2" stroke-width="1"/>
<rect x="16.50" y="400.90" width="1247.50" height="244.10" fill="#fff"/>
<g clip-path="url(#stclip)">
<rect x="16.50" y="418.72" width="1247.50" height="17.82" fill="#ececec"/>
<rect x="16.50" y="454.36" width="1247.50" height="17.82" fill="#ececec"/>
<rect x="16.50" y="490.00" width="1247.50" height="17.82" fill="#ececec"/>
<rect x="16.50" y="525.64" width="1247.50" height="17.82" fill="#ececec"/>
<rect x="16.50" y="561.28" width="1247.50" height="17.82" fill="#ececec"/>
<rect x="16.50" y="596.92" width="1247.50" height="17.82" fill="#ececec"/>
<rect x="16.50" y="632.56" width="1247.50" height="17.82" fill="#ececec"/>
<text class="ui" x="19.9" y="413.8" textLength="74.0" lengthAdjust="spacingAndGlyphs">History Quality</text>
<text class="ui" x="414.2" y="413.8" text-anchor="end" textLength="25.3" lengthAdjust="spacingAndGlyphs">100%</text>
<text class="ui" x="19.9" y="431.6" textLength="20.5" lengthAdjust="spacingAndGlyphs">Bars</text>
<text class="ui" x="414.2" y="431.6" text-anchor="end" textLength="16.2" lengthAdjust="spacingAndGlyphs">165</text>
<text class="ui" x="19.9" y="449.4" textLength="67.5" lengthAdjust="spacingAndGlyphs">Initial Deposit</text>
<text class="ui" x="414.2" y="449.4" text-anchor="end" textLength="38.6" lengthAdjust="spacingAndGlyphs">5 000.00</text>
<text class="ui" x="19.9" y="467.3" textLength="74.0" lengthAdjust="spacingAndGlyphs">Total Net Profit</text>
<text class="ui" x="414.2" y="467.3" text-anchor="end" textLength="18.8" lengthAdjust="spacingAndGlyphs">1.03</text>
<text class="ui" x="19.9" y="485.1" textLength="56.7" lengthAdjust="spacingAndGlyphs">Gross Profit</text>
<text class="ui" x="414.2" y="485.1" text-anchor="end" textLength="18.8" lengthAdjust="spacingAndGlyphs">1.03</text>
<text class="ui" x="19.9" y="502.9" textLength="51.3" lengthAdjust="spacingAndGlyphs">Gross Loss</text>
<text class="ui" x="414.2" y="502.9" text-anchor="end" textLength="19.5" lengthAdjust="spacingAndGlyphs">0.00</text>
<text class="ui" x="19.9" y="538.5" textLength="60.5" lengthAdjust="spacingAndGlyphs">Profit Factor</text>
<text class="ui" x="414.2" y="538.5" text-anchor="end" textLength="19.5" lengthAdjust="spacingAndGlyphs">0.00</text>
<text class="ui" x="19.9" y="556.4" textLength="78.7" lengthAdjust="spacingAndGlyphs">Recovery Factor</text>
<text class="ui" x="414.2" y="556.4" text-anchor="end" textLength="19.3" lengthAdjust="spacingAndGlyphs">0.54</text>
<text class="ui" x="19.9" y="574.2" textLength="28.9" lengthAdjust="spacingAndGlyphs">AHPR</text>
<text class="ui" x="414.2" y="574.2" text-anchor="end" textLength="69.3" lengthAdjust="spacingAndGlyphs">1.0002 (0.02%)</text>
<text class="ui" x="19.9" y="592.0" textLength="28.9" lengthAdjust="spacingAndGlyphs">GHPR</text>
<text class="ui" x="414.2" y="592.0" text-anchor="end" textLength="69.3" lengthAdjust="spacingAndGlyphs">1.0002 (0.02%)</text>
<text class="ui" x="19.9" y="627.6" textLength="57.0" lengthAdjust="spacingAndGlyphs">Total Trades</text>
<text class="ui" x="414.2" y="627.6" text-anchor="end">1</text>
<text class="ui" x="19.9" y="645.5" textLength="51.3" lengthAdjust="spacingAndGlyphs">Total Deals</text>
<text class="ui" x="414.2" y="645.5" text-anchor="end">2</text>
<text class="ui" x="440.6" y="431.6" textLength="23.8" lengthAdjust="spacingAndGlyphs">Ticks</text>
<text class="ui" x="834.4" y="431.6" text-anchor="end" textLength="32.9" lengthAdjust="spacingAndGlyphs">425253</text>
<text class="ui" x="440.6" y="467.3" textLength="141.2" lengthAdjust="spacingAndGlyphs">Balance Drawdown Absolute</text>
<text class="ui" x="834.4" y="467.3" text-anchor="end" textLength="19.3" lengthAdjust="spacingAndGlyphs">0.00</text>
<text class="ui" x="440.6" y="485.1" textLength="140.0" lengthAdjust="spacingAndGlyphs">Balance Drawdown Maximal</text>
<text class="ui" x="834.4" y="485.1" text-anchor="end" textLength="58.8" lengthAdjust="spacingAndGlyphs">0.00 (0.00%)</text>
<text class="ui" x="440.6" y="502.9" textLength="135.7" lengthAdjust="spacingAndGlyphs">Balance Drawdown Relative</text>
<text class="ui" x="834.4" y="502.9" text-anchor="end" textLength="58.8" lengthAdjust="spacingAndGlyphs">0.00% (0.00)</text>
<text class="ui" x="440.6" y="538.5" textLength="79.4" lengthAdjust="spacingAndGlyphs">Expected Payoff</text>
<text class="ui" x="834.4" y="538.5" text-anchor="end" textLength="18.8" lengthAdjust="spacingAndGlyphs">1.03</text>
<text class="ui" x="440.6" y="556.4" textLength="61.4" lengthAdjust="spacingAndGlyphs">Sharpe Ratio</text>
<text class="ui" x="834.4" y="556.4" text-anchor="end" textLength="19.3" lengthAdjust="spacingAndGlyphs">0.03</text>
<text class="ui" x="440.6" y="574.2" textLength="69.7" lengthAdjust="spacingAndGlyphs">LR Correlation</text>
<text class="ui" x="834.4" y="574.2" text-anchor="end" textLength="19.3" lengthAdjust="spacingAndGlyphs">0.00</text>
<text class="ui" x="440.6" y="592.0" textLength="85.2" lengthAdjust="spacingAndGlyphs">LR Standard Error</text>
<text class="ui" x="834.4" y="592.0" text-anchor="end" textLength="19.3" lengthAdjust="spacingAndGlyphs">0.00</text>
<text class="ui" x="440.6" y="627.6" textLength="104.0" lengthAdjust="spacingAndGlyphs">Short Trades (won %)</text>
<text class="ui" x="834.4" y="627.6" text-anchor="end" textLength="44.6" lengthAdjust="spacingAndGlyphs">0 (0.00%)</text>
<text class="ui" x="440.6" y="645.5" textLength="118.4" lengthAdjust="spacingAndGlyphs">Profit Trades (% of total)</text>
<text class="ui" x="834.4" y="645.5" text-anchor="end" textLength="55.4" lengthAdjust="spacingAndGlyphs">1 (100.00%)</text>
<text class="ui" x="861.2" y="431.6" textLength="42.2" lengthAdjust="spacingAndGlyphs">Symbols</text>
<text class="ui" x="1260.5" y="431.6" text-anchor="end">1</text>
<text class="ui" x="861.2" y="467.3" textLength="133.9" lengthAdjust="spacingAndGlyphs">Equity Drawdown Absolute</text>
<text class="ui" x="1260.5" y="467.3" text-anchor="end" textLength="19.0" lengthAdjust="spacingAndGlyphs">1.61</text>
<text class="ui" x="861.2" y="485.1" textLength="132.5" lengthAdjust="spacingAndGlyphs">Equity Drawdown Maximal</text>
<text class="ui" x="1260.5" y="485.1" text-anchor="end" textLength="59.2" lengthAdjust="spacingAndGlyphs">1.92 (0.04%)</text>
<text class="ui" x="861.2" y="502.9" textLength="128.5" lengthAdjust="spacingAndGlyphs">Equity Drawdown Relative</text>
<text class="ui" x="1260.5" y="502.9" text-anchor="end" textLength="59.2" lengthAdjust="spacingAndGlyphs">0.04% (1.92)</text>
<text class="ui" x="861.2" y="538.5" textLength="63.5" lengthAdjust="spacingAndGlyphs">Margin Level</text>
<text class="ui" x="1260.5" y="538.5" text-anchor="end" textLength="52.0" lengthAdjust="spacingAndGlyphs">99967.80%</text>
<text class="ui" x="861.2" y="556.4" textLength="38.6" lengthAdjust="spacingAndGlyphs">Z-Score</text>
<text class="ui" x="1260.5" y="556.4" text-anchor="end" textLength="59.2" lengthAdjust="spacingAndGlyphs">0.00 (0.00%)</text>
<text class="ui" x="861.2" y="574.2" textLength="72.9" lengthAdjust="spacingAndGlyphs">OnTester result</text>
<text class="ui" x="1260.5" y="574.2" text-anchor="end">0</text>
<text class="ui" x="861.2" y="627.6" textLength="102.5" lengthAdjust="spacingAndGlyphs">Long Trades (won %)</text>
<text class="ui" x="1260.5" y="627.6" text-anchor="end" textLength="55.6" lengthAdjust="spacingAndGlyphs">1 (100.00%)</text>
<text class="ui" x="861.2" y="645.5" textLength="112.6" lengthAdjust="spacingAndGlyphs">Loss Trades (% of total)</text>
<text class="ui" x="1260.5" y="645.5" text-anchor="end" textLength="45.8" lengthAdjust="spacingAndGlyphs">0 (0.00%)</text>
</g>
<rect x="439.30" y="403.20" width="822.60" height="13.00" fill="#c4c4c4"/>
<rect x="439.80" y="403.70" width="780.20" height="12.00" fill="#92f57e"/>
<rect x="439.8" y="403.7" width="821.6" height="12" fill="none" stroke="#5a5a5a" stroke-width="1"/>
<rect x="1264.00" y="401.00" width="16.00" height="244.00" fill="#f0f0f0"/>
<path d="M1268.6,411.3 L1272,407.90000000000003 L1275.4,411.3" stroke="#5a5a5a" stroke-width="1.5" fill="none"/>
<path d="M1268.6,633.3 L1272,636.7 L1275.4,633.3" stroke="#5a5a5a" stroke-width="1.5" fill="none"/>
<rect x="1266.00" y="417.40" width="12.60" height="34.60" fill="#cdcdcd"/>
<line x1="17.00" y1="643.00" x2="194.60" y2="643.00" stroke="#505050" stroke-width="1.4"/>
<line x1="253.40" y1="643.00" x2="1264.00" y2="643.00" stroke="#505050" stroke-width="1.4"/>
<rect x="17.00" y="643.70" width="1247.00" height="1.30" fill="#f4f4f4"/>
<rect x="194.60" y="642.20" width="58.80" height="2.80" fill="#fff"/>
<line x1="194.40" y1="642.60" x2="194.40" y2="645.00" stroke="#000" stroke-width="1"/>
<line x1="253.60" y1="642.60" x2="253.60" y2="645.00" stroke="#000" stroke-width="1"/>
<rect x="0.00" y="401.00" width="15.20" height="244.00" fill="#9db4d3"/>
<line x1="4.30" y1="407.80" x2="10.70" y2="414.20" stroke="#000" stroke-width="1.5"/>
<line x1="4.30" y1="414.20" x2="10.70" y2="407.80" stroke="#000" stroke-width="1.5"/>
<clipPath id="stripclip"><rect x="0" y="401" width="16" height="244"/></clipPath>
<g clip-path="url(#stripclip)"><text class="ui" transform="translate(10.9,663) rotate(-90)" textLength="73" lengthAdjust="spacingAndGlyphs">Strategy Tester</text></g>
<g fill="#000" opacity="0.06"><use href="#logo" transform="translate(155.5,182) scale(0.75)"/>
<text x="111.2" y="286.6" font-family="Liberation Sans, sans-serif" font-weight="bold" font-size="15.8" textLength="88.5" lengthAdjust="spacing">YOFOREX</text></g>
<g fill="#000" opacity="0.045"><use href="#logo" transform="translate(154.5,477.6) scale(0.8)"/>
<text x="107.3" y="589.1" font-family="Liberation Sans, sans-serif" font-weight="bold" font-size="16.9" textLength="94.4" lengthAdjust="spacing">YOFOREX</text></g>
<g fill="#000" opacity="0.085"><use href="#logo" transform="translate(153.2,476.1) scale(0.8)"/>
<text x="106.0" y="587.6" font-family="Liberation Sans, sans-serif" font-weight="bold" font-size="16.9" textLength="94.4" lengthAdjust="spacing">YOFOREX</text></g>
<g fill="#000" opacity="0.045"><use href="#logo" transform="translate(521.3,477.6) scale(0.8)"/>
<text x="474.1" y="589.1" font-family="Liberation Sans, sans-serif" font-weight="bold" font-size="16.9" textLength="94.4" lengthAdjust="spacing">YOFOREX</text></g>
<g fill="#000" opacity="0.085"><use href="#logo" transform="translate(520,476.1) scale(0.8)"/>
<text x="472.8" y="587.6" font-family="Liberation Sans, sans-serif" font-weight="bold" font-size="16.9" textLength="94.4" lengthAdjust="spacing">YOFOREX</text></g>
<g fill="#000" opacity="0.045"><use href="#logo" transform="translate(832.8,477.6) scale(0.8)"/>
<text x="785.6" y="589.1" font-family="Liberation Sans, sans-serif" font-weight="bold" font-size="16.9" textLength="94.4" lengthAdjust="spacing">YOFOREX</text></g>
<g fill="#000" opacity="0.085"><use href="#logo" transform="translate(831.5,476.1) scale(0.8)"/>
<text x="784.3" y="587.6" font-family="Liberation Sans, sans-serif" font-weight="bold" font-size="16.9" textLength="94.4" lengthAdjust="spacing">YOFOREX</text></g>
<rect x="0.00" y="0.00" width="1280.00" height="75.00" fill="#000"/>
<rect x="0.00" y="645.00" width="1280.00" height="75.00" fill="#000"/>
</svg>
</body></html>
